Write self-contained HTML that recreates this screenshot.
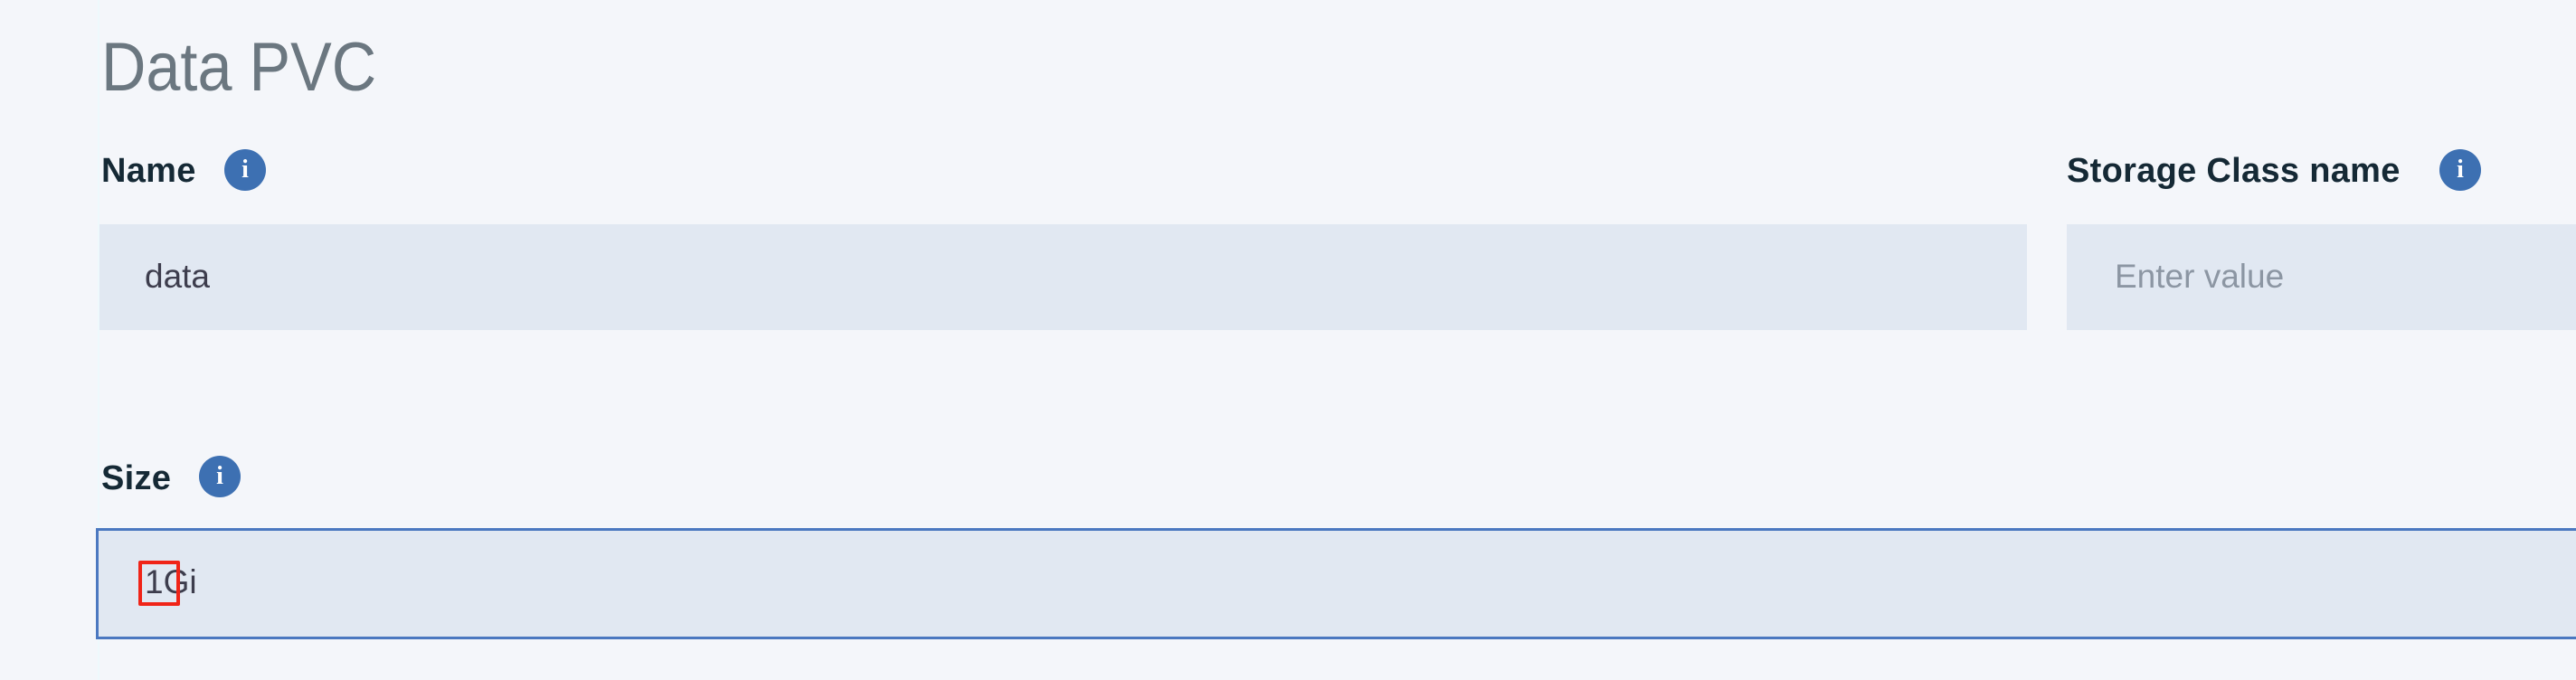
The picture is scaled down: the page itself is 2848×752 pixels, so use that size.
<!DOCTYPE html>
<html><head><style>
html,body{margin:0;padding:0;width:2848px;height:752px;overflow:hidden;background:#f4f6fa;font-family:"Liberation Sans",sans-serif;}
.a{position:absolute;}
.title{left:112px;top:30px;font-size:76px;font-weight:normal;color:#6b7780;line-height:90px;transform:scaleX(0.9);transform-origin:left top;}
.lbl{font-size:38px;font-weight:bold;color:#152935;line-height:40px;letter-spacing:0.3px;}
.ic{width:46px;height:46px;border-radius:50%;background:#3d70b2;color:#fff;font:bold 28px "Liberation Serif",serif;text-align:center;line-height:46px;}
.inp{background:#e1e8f2;}
.txt{font-size:37px;color:#3d3d4d;line-height:40px;}
</style></head><body>
<div class="a" style="left:108px;top:0;width:2px;height:752px;background:#eef9fc"></div>
<div class="a title">Data PVC</div>
<div class="a lbl" style="left:112px;top:169px">Name</div>
<div class="a ic" style="left:248px;top:165px">i</div>
<div class="a inp" style="left:110px;top:248px;width:2131px;height:117px"></div>
<div class="a txt" style="left:160px;top:286px">data</div>
<div class="a lbl" style="left:2285px;top:169px">Storage Class name</div>
<div class="a ic" style="left:2697px;top:165px">i</div>
<div class="a inp" style="left:2285px;top:248px;width:600px;height:117px"></div>
<div class="a txt" style="left:2338px;top:286px;color:#8c96a3">Enter value</div>
<div class="a lbl" style="left:112px;top:509px">Size</div>
<div class="a ic" style="left:220px;top:504px">i</div>
<div class="a inp" style="left:106px;top:584px;width:2800px;height:117px;border:3px solid #4b78c0;"></div>
<div class="a txt" style="left:160px;top:624px">1Gi</div>
<div class="a" style="left:153px;top:620px;width:38px;height:42px;border:4px solid #f02418;border-radius:2px"></div>
</body></html>
